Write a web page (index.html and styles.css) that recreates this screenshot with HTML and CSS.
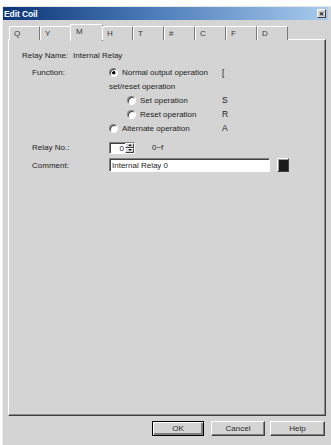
FILE: index.html
```html
<!DOCTYPE html>
<html>
<head>
<meta charset="utf-8">
<link rel="stylesheet" href="styles.css">
</head>
<body>
<div class="dialog">
  <div class="titlebar">
    <span class="title">Edit Coil</span>
    <span class="close">&#x2715;</span>
  </div>
  <div class="content">
    <div class="tabs">
      <div class="tab">Q</div>
      <div class="tab">Y</div>
      <div class="tab sel">M</div>
      <div class="tab">H</div>
      <div class="tab">T</div>
      <div class="tab">#</div>
      <div class="tab">C</div>
      <div class="tab">F</div>
      <div class="tab">D</div>
    </div>
    <div class="panel">
      <div class="row r-name">
        <span class="name-lbl">Relay Name:</span>
        <span>Internal Relay</span>
      </div>
      <div class="row r-func">
        <span class="lbl">Function:</span>
        <span class="ctl"><span class="radio on"></span><span>Normal output operation</span></span>
        <span class="code">[</span>
      </div>
      <div class="row r-std">
        <span class="lbl"></span>
        <span class="ctl">set/reset operation</span>
      </div>
      <div class="row r-std">
        <span class="lbl"></span>
        <span class="ctl sub"><span class="radio"></span><span>Set operation</span></span>
        <span class="code">S</span>
      </div>
      <div class="row r-std">
        <span class="lbl"></span>
        <span class="ctl sub"><span class="radio"></span><span>Reset operation</span></span>
        <span class="code">R</span>
      </div>
      <div class="row r-std">
        <span class="lbl"></span>
        <span class="ctl"><span class="radio"></span><span>Alternate operation</span></span>
        <span class="code">A</span>
      </div>
      <div class="row r-no">
        <span class="lbl">Relay No.:</span>
        <span class="ctl">
          <span class="spin">
            <span class="spin-val">0</span>
            <span class="spin-btns">
              <span class="spin-btn"><svg width="5" height="3" viewBox="0 0 5 3"><path d="M2.5 0 L5 3 L0 3 Z" fill="#000"/></svg></span>
              <span class="spin-btn"><svg width="5" height="3" viewBox="0 0 5 3"><path d="M0 0 L5 0 L2.5 3 Z" fill="#000"/></svg></span>
            </span>
          </span>
          <span class="range">0~f</span>
        </span>
      </div>
      <div class="row r-comment">
        <span class="lbl">Comment:</span>
        <span class="ctl">
          <span class="input">Internal Relay 0</span>
          <span class="swatch"></span>
        </span>
      </div>
    </div>
    <div class="buttons">
      <div class="btn ok">OK</div>
      <div class="btn cancel">Cancel</div>
      <div class="btn help">Help</div>
    </div>
  </div>
</div>
</body>
</html>
```

FILE: styles.css
```css
html, body {
  margin: 0;
  padding: 0;
  background: #ffffff;
}
body {
  font-family: "Liberation Sans", Arial, sans-serif;
  font-size: 8px;
  color: #1c1c1c;
  width: 331px;
  height: 445px;
  overflow: hidden;
}
.dialog {
  margin: 6px 0 0 2px;
  width: 329px;
  height: 439px;
  box-sizing: border-box;
  background: #d4d4d4;
  border-top: 1px solid #e4e4e4;
  border-left: 1px solid #ececec;
  padding-right: 3px;
  display: flex;
  flex-direction: column;
}
.titlebar {
  height: 13px;
  background: linear-gradient(to right, #0c3576, #4a7ab8 45%, #a8cbee);
  display: flex;
  align-items: center;
  justify-content: space-between;
  padding: 0 2px 0 1px;
}
.title {
  color: #ffffff;
  font-weight: bold;
  font-size: 8.5px;
  letter-spacing: -0.1px;
}
.close {
  width: 9px;
  height: 9px;
  box-sizing: border-box;
  background: #d4d4d4;
  border: 1px solid;
  border-color: #ffffff #404040 #404040 #ffffff;
  font-size: 6px;
  font-weight: bold;
  color: #000;
  display: flex;
  align-items: center;
  justify-content: center;
  line-height: 1;
}
.content {
  flex: 1;
  display: flex;
  flex-direction: column;
  padding: 4px 0 0 5px;
}
.tabs {
  display: flex;
  height: 16px;
  padding-left: 1px;
  position: relative;
  z-index: 1;
  margin-bottom: -1px;
}
.tab {
  width: 31px;
  height: 14px;
  margin-top: 2px;
  box-sizing: border-box;
  border-top: 1px solid #ffffff;
  border-left: 1px solid #ffffff;
  border-right: 1px solid #7a7a7a;
  padding-left: 4px;
  line-height: 13px;
  color: #3a3a3a;
  background: #d4d4d4;
}
.tab.sel {
  margin-top: 0;
  height: 17px;
  line-height: 14px;
  width: 33px;
  margin-left: -1px;
  margin-right: -1px;
  padding-left: 5px;
}
.panel {
  height: 377px;
  margin-right: 2px;
  box-sizing: border-box;
  border-top: 1px solid #ffffff;
  border-left: 1px solid #ffffff;
  border-right: 1px solid #404040;
  border-bottom: 1px solid #404040;
  box-shadow: inset -1px -1px 0 #8a8a8a;
  padding-top: 8px;
}
.row {
  display: grid;
  grid-template-columns: 100px 113px auto;
  align-items: center;
  height: 14px;
}
.r-name {
  display: flex;
  padding-left: 13px;
}
.name-lbl {
  width: 51px;
}
.r-func {
  margin-top: 4px;
  height: 13px;
}
.r-no {
  margin-top: 6px;
  height: 13px;
}
.r-comment {
  margin-top: 4px;
  grid-template-columns: 100px auto;
}
.lbl {
  padding-left: 23px;
}
.ctl {
  display: flex;
  align-items: center;
  gap: 4px;
}
.ctl.sub {
  padding-left: 18px;
}
.code {
  font-size: 8.5px;
}
.radio {
  width: 9px;
  height: 9px;
  box-sizing: border-box;
  border-radius: 50%;
  border: 1px solid;
  border-color: #808080 #ffffff #ffffff #808080;
  background: #ffffff;
  box-shadow: inset 1px 1px 0 #404040;
  flex: none;
}
.radio.on {
  background: radial-gradient(circle at 55% 55%, #000 0 1.4px, #ffffff 1.9px);
}
.spin {
  display: flex;
  width: 26px;
  height: 12px;
  box-sizing: border-box;
  border: 1px solid;
  border-color: #808080 #ffffff #ffffff #808080;
  box-shadow: inset 1px 1px 0 #404040;
  background: #ffffff;
}
.spin-val {
  flex: 1;
  text-align: right;
  padding-right: 1px;
  line-height: 10px;
  padding-top: 1px;
}
.spin-btns {
  width: 9px;
  display: flex;
  flex-direction: column;
}
.spin-btn {
  flex: 1;
  background: #d4d4d4;
  box-sizing: border-box;
  border: 1px solid;
  border-color: #ffffff #404040 #404040 #ffffff;
  display: flex;
  align-items: center;
  justify-content: center;
}
.spin-btn svg {
  display: block;
  width: 4px;
  height: 2px;
}
.range {
  margin-left: 13px;
}
.input {
  width: 161px;
  height: 14px;
  box-sizing: border-box;
  border: 1px solid;
  border-color: #808080 #ffffff #ffffff #808080;
  box-shadow: inset 1px 1px 0 #404040;
  background: #ffffff;
  padding: 1px 0 0 2px;
  line-height: 12px;
}
.swatch {
  margin-left: 3px;
  width: 12px;
  height: 14px;
  box-sizing: border-box;
  border: 1px solid;
  border-color: #ffffff #404040 #404040 #ffffff;
  background: #1a1a1a;
  box-shadow: inset 1px 1px 0 #9a9a9a;
}
.buttons {
  display: flex;
  justify-content: flex-end;
  margin-top: 5px;
  padding-right: 3px;
}
.btn {
  height: 15px;
  box-sizing: border-box;
  border: 1px solid;
  border-color: #ffffff #404040 #404040 #ffffff;
  box-shadow: inset -1px -1px 0 #808080;
  display: flex;
  align-items: center;
  justify-content: center;
  color: #2a2a2a;
}
.ok {
  width: 52px;
  border: 1px solid #000000;
  box-shadow: inset 1px 1px 0 #ffffff, inset -2px -2px 0 #808080;
}
.cancel {
  width: 54px;
  margin-left: 7px;
}
.help {
  width: 55px;
  margin-left: 5px;
}
```
